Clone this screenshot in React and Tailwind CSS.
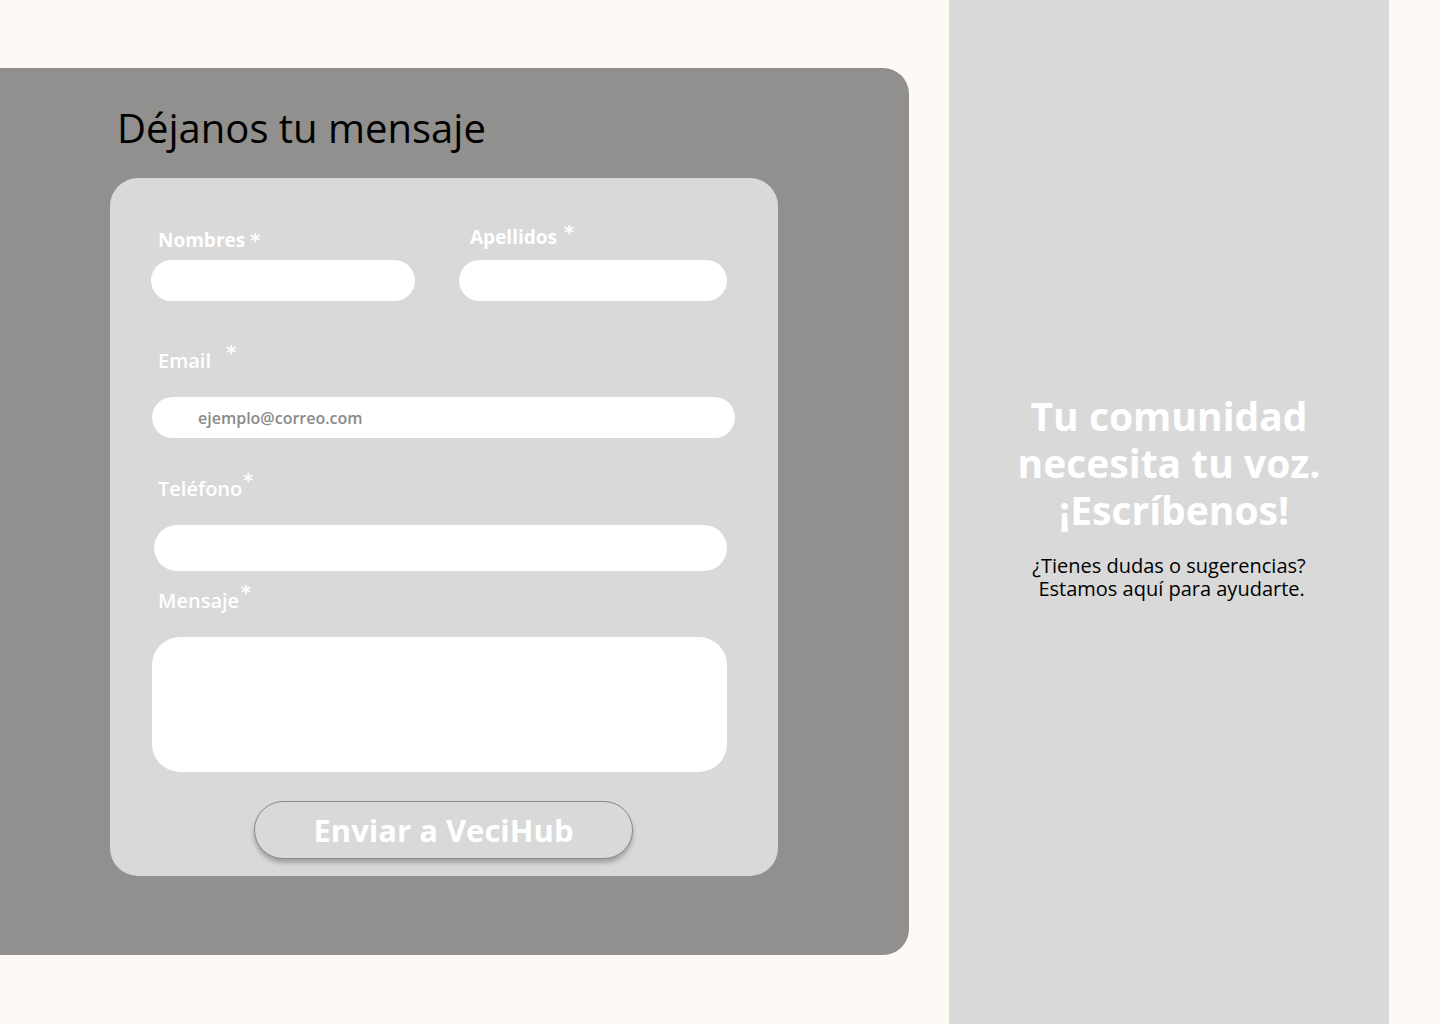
export default function App() {
  const font = { fontFamily: "'Open Sans', Lato, sans-serif" };
  return (
    <div className="min-h-screen w-[1440px] bg-[#fdfaf5] flex" style={font}>
      <div className="mt-[68px] w-[909px] h-[887px] bg-[#91908e] rounded-r-[26px] pl-[110px] pt-[36px]">
        <h1 className="ml-[7px] text-[40px] leading-[48px] font-medium text-black">Déjanos tu mensaje</h1>

        <div className="mt-[26px] w-[668px] h-[698px] bg-[#d9d9d9] rounded-[28px] pt-[50px] px-[41px]">
          <div className="flex gap-[44px]">
            <div className="w-[264px]">
              <label className="block ml-[7px] h-6 leading-6 text-[19px] font-bold text-white">
                Nombres <span className="font-['DejaVu_Sans'] font-bold text-[19px]">*</span>
              </label>
              <input className="mt-[8px] block w-full h-[41px] rounded-full bg-white outline-none" />
            </div>
            <div className="w-[268px] -mt-[3px]">
              <label className="block ml-[11px] h-6 leading-6 text-[19px] font-bold text-white">
                Apellidos <span className="relative -top-[5px] ml-[2px] font-['DejaVu_Sans'] font-bold text-[19px]">*</span>
              </label>
              <input className="mt-[11px] block w-full h-[41px] rounded-full bg-white outline-none" />
            </div>
          </div>

          <label className="block mt-[48px] ml-[7px] h-6 leading-6 text-[20px] font-semibold text-white">
            Email <span className="relative -top-[9px] ml-[10px] font-['DejaVu_Sans'] font-bold text-[19px]">*</span>
          </label>
          <input
            placeholder="ejemplo@correo.com"
            className="mt-[24px] ml-px block w-[583px] h-[41px] rounded-full bg-white pl-[46px] text-[16px] font-semibold text-gray-700 placeholder:text-[#8a8a8a] outline-none"
          />

          <label className="block mt-[39px] ml-[7px] h-6 leading-6 text-[20px] font-semibold text-white">
            Teléfono<span className="relative -top-[9px] ml-[1px] font-['DejaVu_Sans'] font-bold text-[19px]">*</span>
          </label>
          <input className="mt-[24px] ml-[3px] block w-[573px] h-[46px] rounded-full bg-white outline-none" />

          <label className="block mt-[18px] ml-[7px] h-6 leading-6 text-[20px] font-semibold text-white">
            Mensaje<span className="relative -top-[9px] ml-[2px] font-['DejaVu_Sans'] font-bold text-[19px]">*</span>
          </label>
          <textarea className="mt-[24px] ml-px block w-[575px] h-[135px] rounded-[28px] bg-white resize-none outline-none p-4" />

          <button className="mt-[29px] ml-[103px] block w-[379px] h-[58px] rounded-full border border-[#8a8a8a] bg-[#d9d9d9] shadow-[0_4px_4px_rgba(0,0,0,0.25)] text-white text-[31px] font-bold leading-none">
            Enviar a VeciHub
          </button>
        </div>
      </div>

      <div className="ml-[40px] w-[440px] min-h-screen bg-[#d9d9d9] pt-[392px] text-center">
        <h2 className="text-[39px] leading-[47px] font-bold text-white">
          Tu comunidad
          <br />
          necesita tu voz.
          <br />
          {"\u00a0"}¡Escríbenos!
        </h2>
        <p className="mt-[21px] text-[20px] leading-[23px] font-medium text-black">
          ¿Tienes dudas o sugerencias?
          <br />
          {"\u00a0"}Estamos aquí para ayudarte.
        </p>
      </div>
    </div>
  );
}
